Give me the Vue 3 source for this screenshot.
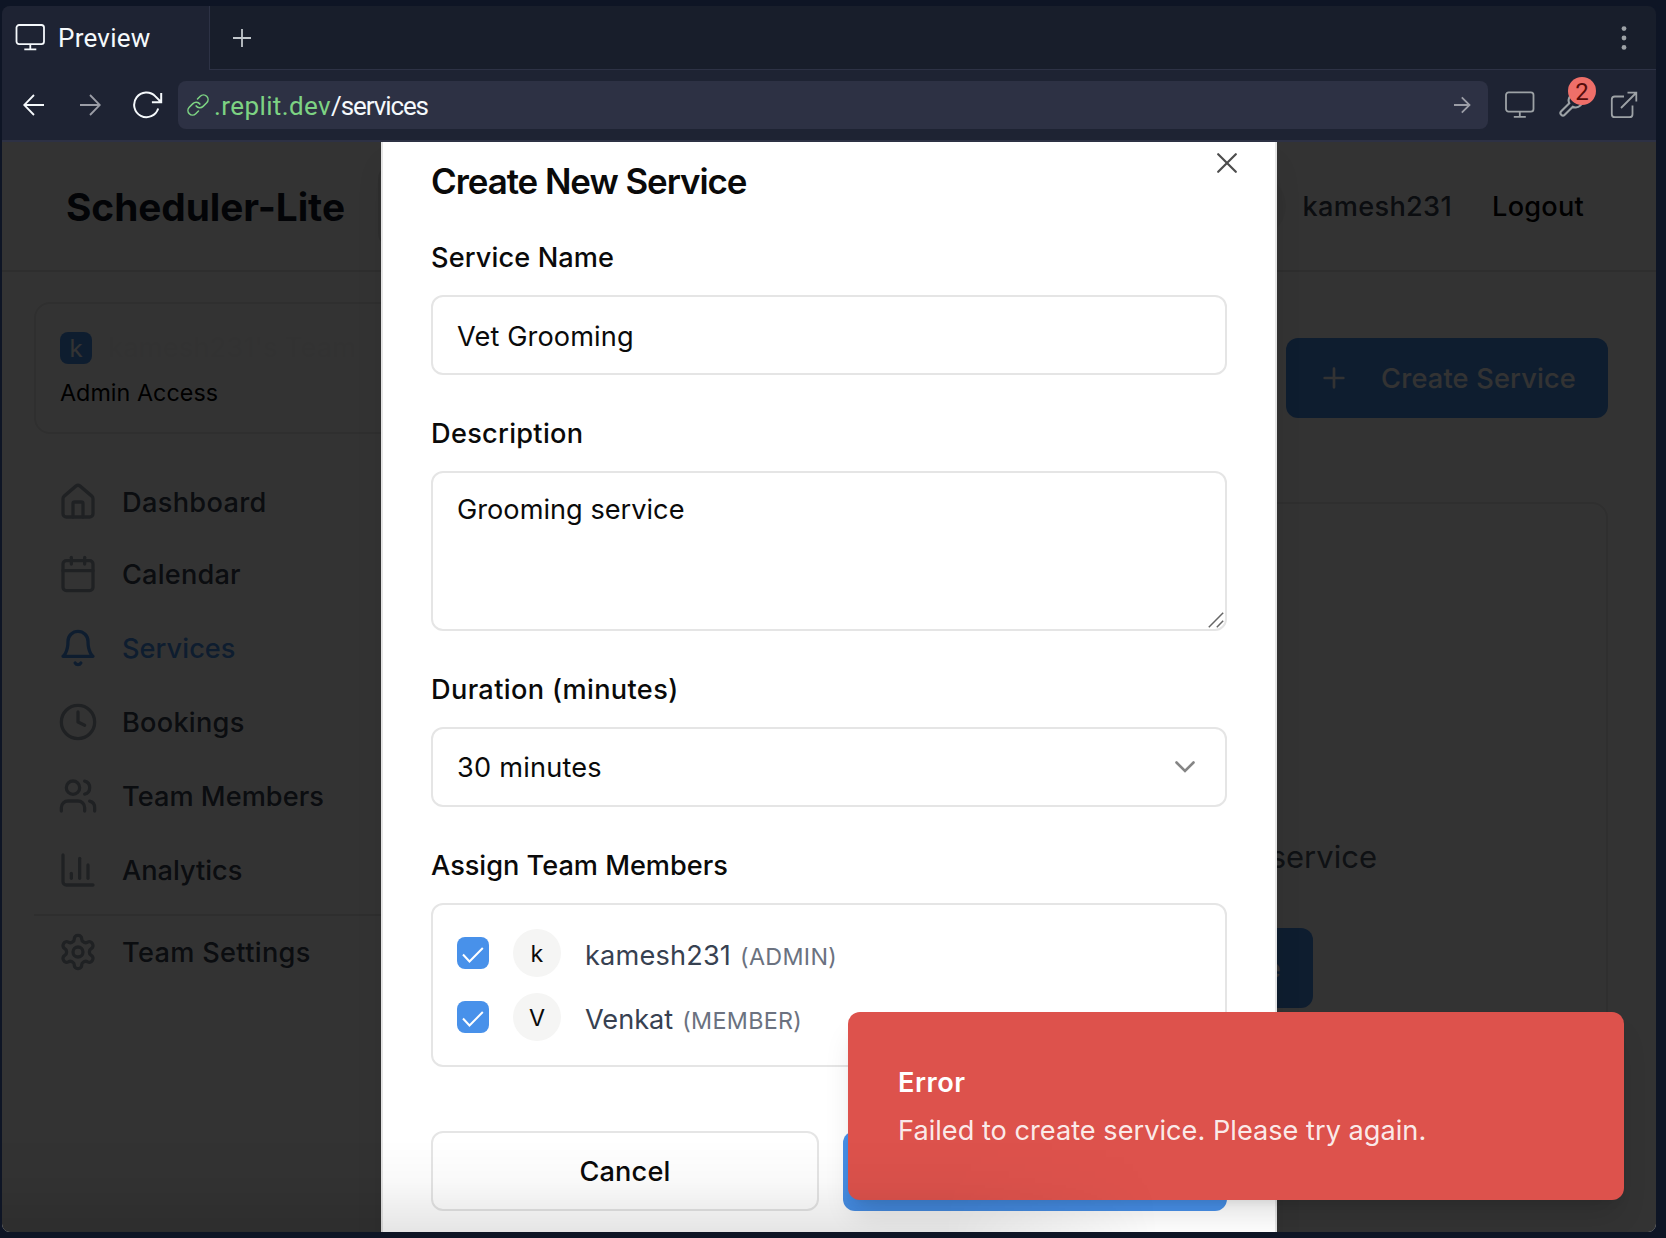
<script setup>
const nav = [
  { key: 'dashboard', label: 'Dashboard', paths: ['M15 21v-8a1 1 0 0 0-1-1h-4a1 1 0 0 0-1 1v8', 'M3 10a2 2 0 0 1 .709-1.528l7-5.999a2 2 0 0 1 2.582 0l7 5.999A2 2 0 0 1 21 10v9a2 2 0 0 1-2 2H5a2 2 0 0 1-2-2z'] },
  { key: 'calendar', label: 'Calendar', paths: ['M8 2v4', 'M16 2v4', 'M5 4h14a2 2 0 0 1 2 2v14a2 2 0 0 1-2 2H5a2 2 0 0 1-2-2V6a2 2 0 0 1 2-2z', 'M3 10h18'] },
  { key: 'services', label: 'Services', active: true, paths: ['M6 8a6 6 0 0 1 12 0c0 7 3 9 3 9H3s3-2 3-9', 'M10.3 21a1.94 1.94 0 0 0 3.4 0'] },
  { key: 'bookings', label: 'Bookings', paths: ['M12 2a10 10 0 1 0 0 20a10 10 0 1 0 0-20', 'M12 6v6l4 2'] },
  { key: 'people', label: 'Team Members', paths: ['M16 21v-2a4 4 0 0 0-4-4H6a4 4 0 0 0-4 4v2', 'M9 3a4 4 0 1 0 0 8a4 4 0 1 0 0-8', 'M22 21v-2a4 4 0 0 0-3-3.87', 'M16 3.13a4 4 0 0 1 0 7.75'] },
  { key: 'analytics', label: 'Analytics', paths: ['M3 3v16a2 2 0 0 0 2 2h16', 'M18 17V9', 'M13 17V5', 'M8 17v-3'] },
  { key: 'settings', label: 'Team Settings', paths: ['M12.22 2h-.44a2 2 0 0 0-2 2v.18a2 2 0 0 1-1 1.73l-.43.25a2 2 0 0 1-2 0l-.15-.08a2 2 0 0 0-2.73.73l-.22.38a2 2 0 0 0 .73 2.73l.15.1a2 2 0 0 1 1 1.72v.51a2 2 0 0 1-1 1.74l-.15.09a2 2 0 0 0-.73 2.73l.22.38a2 2 0 0 0 2.73.73l.15-.08a2 2 0 0 1 2 0l.43.25a2 2 0 0 1 1 1.73V20a2 2 0 0 0 2 2h.44a2 2 0 0 0 2-2v-.18a2 2 0 0 1 1-1.73l.43-.25a2 2 0 0 1 2 0l.15.08a2 2 0 0 0 2.73-.73l.22-.39a2 2 0 0 0-.73-2.73l-.15-.08a2 2 0 0 1-1-1.74v-.5a2 2 0 0 1 1-1.74l.15-.09a2 2 0 0 0 .73-2.73l-.22-.38a2 2 0 0 0-2.73-.73l-.15.08a2 2 0 0 1-2 0l-.43-.25a2 2 0 0 1-1-1.73V4a2 2 0 0 0-2-2z', 'M12 9a3 3 0 1 0 0 6a3 3 0 1 0 0-6'] },
]

const members = [
  { key: 'kamesh', initial: 'k', name: 'kamesh231', role: '(ADMIN)' },
  { key: 'venkat', initial: 'V', name: 'Venkat', role: '(MEMBER)' },
]
</script>

<template>
  <div class="desk">
    <div class="frame">
      <div class="tabs">
        <div class="tab">
          <svg class="ic" width="30" height="28" viewBox="0 0 30 28"><rect x="1.5" y="1" width="27.5" height="19.2" rx="2.6" /><path d="M15.3 20.2v5M9.300 25.4h12" /></svg>
          <span class="tab-name">Preview</span>
        </div>
        <svg class="ic add" width="18" height="18" viewBox="0 0 18 18"><path d="M9 0v18M0 9h18" /></svg>
        <svg class="kebab" width="6" height="26" viewBox="0 0 6 26"><circle cx="3" cy="3.6" r="2.4" /><circle cx="3" cy="13" r="2.4" /><circle cx="3" cy="22.4" r="2.4" /></svg>
      </div>

      <div class="toolbar">
        <svg class="ic back" width="22" height="22" viewBox="0 0 22 22"><path d="M21 11H1.5M11 1L1.2 11L11 21" /></svg>
        <svg class="ic fwd" width="22" height="22" viewBox="0 0 22 22"><path d="M1 11h19.5M11 1l9.8 10L11 21" /></svg>
        <svg class="ic reload" width="30" height="28" viewBox="0 0 30 28"><path d="M25.2 17.5A12.3 12.3 0 1 1 22.4 5.400L28 11M28.2 2v9.3h-9.3" /></svg>
        <div class="url">
          <svg class="link" width="22" height="22" viewBox="0 0 24 24"><path d="M10 13a5 5 0 0 0 7.54.54l4-4a5 5 0 0 0-7.07-7.07l-3 3" /><path d="M14 11a5 5 0 0 0-7.54-.54l-4 4a5 5 0 0 0 7.07 7.07l3-3" /></svg>
          <span class="host">.replit.dev</span><span class="path">/services</span>
          <svg class="ic go" width="18" height="18" viewBox="0 0 18 18"><path d="M1 9h15.5M8.8 1.3L16.5 9l-7.7 7.7" /></svg>
        </div>
        <svg class="ic dim monitor" width="30" height="28" viewBox="0 0 30 28"><rect x="1" y="1.4" width="27.5" height="19.2" rx="2.6" /><path d="M14.8 20.6v5M8.8 25.8h12" /></svg>
        <div class="tools">
          <svg class="ic dim" width="28" height="28" viewBox="0 0 24 24"><path d="M14.7 6.3a1 1 0 0 0 0 1.400l1.6 1.6a1 1 0 0 0 1.4 0l3.77-3.77a6 6 0 0 1-7.94 7.94l-6.910 6.91a2.12 2.12 0 0 1-3-3l6.91-6.91a6 6 0 0 1 7.94-7.94l-3.76 3.76z" /></svg>
          <span class="badge">2</span>
        </div>
        <svg class="ic dim open" width="28" height="28" viewBox="0 0 28 28"><path d="M14 5.5H4.8a3 3 0 0 0-3 3v14.7a3 3 0 0 0 3 3h14.7a3 3 0 0 0 3-3V14.5M11 17L26 2M17.500 1.7h8.8v8.8" /></svg>
      </div>

      <div class="view">
        <header class="head">
          <span class="brand">Scheduler-Lite</span>
          <span class="team-select"></span>
          <span class="avatar-lg"></span>
          <span class="user">kamesh231</span>
          <span class="logout">Logout</span>
        </header>
        <div class="body">
          <aside class="side">
            <div class="team">
              <div class="team-row"><span class="team-badge">k</span><span class="team-name">kamesh231's Team</span></div>
              <div class="team-role">Admin Access</div>
            </div>
            <nav class="nav">
              <div v-for="n in nav" :key="n.key" class="nav-item" :class="[`nav-${n.key}`, { active: n.active }]">
                <svg width="40" height="40" viewBox="0 0 24 24"><path v-for="p in n.paths" :key="p" :d="p" /></svg>
                <span>{{ n.label }}</span>
              </div>
            </nav>
          </aside>
          <main class="main">
            <div class="create">
              <svg width="32" height="32" viewBox="0 0 24 24"><path d="M5 12h14M12 5v14" /></svg>
              <span>Create Service</span>
            </div>
            <section class="empty">
              <p class="hint">service</p>
              <div class="create empty-btn"><span>Create Service</span></div>
            </section>
          </main>
        </div>

        <div class="scrim"></div>

        <div class="dialog">
          <h2 class="title">Create New Service</h2>
          <svg class="close" width="20" height="20" viewBox="0 0 20 20"><path d="M1.2 1.2l17.6 17.6M18.8 1.2L1.2 18.8" /></svg>

          <label class="label l-name">Service Name</label>
          <div class="field"><span class="v-name">Vet Grooming</span></div>

          <label class="label l-desc">Description</label>
          <div class="field area">
            <span>Grooming service</span>
            <svg class="grip" width="16" height="16" viewBox="0 0 16 16"><path d="M.8 15.2L15.2.8M8.8 15.2l6.4-6.4" /></svg>
          </div>

          <label class="label l-dur">Duration (minutes)</label>
          <div class="field select">
            <span class="v-dur">30 minutes</span>
            <svg width="20" height="12" viewBox="0 0 20 12"><path d="M1.5 1.5l8.5 8.5l8.5-8.5" /></svg>
          </div>

          <label class="label">Assign Team Members</label>
          <div class="members">
            <div v-for="m in members" :key="m.key" class="member" :class="m.key">
              <span class="check"><svg width="22" height="16" viewBox="0 0 22 16"><path d="M1 7.5l6.5 7L20.8 1" /></svg></span>
              <span class="avatar">{{ m.initial }}</span>
              <span class="m-name">{{ m.name }}</span>
              <span class="m-role">{{ m.role }}</span>
            </div>
          </div>

          <div class="actions">
            <div class="cancel">Cancel</div>
            <div class="submit"></div>
          </div>
        </div>

        <div class="toast">
          <div class="t-title">Error</div>
          <div class="t-text">Failed to create service. Please try again.</div>
        </div>
        <div class="shade"></div>
      </div>
    </div>
  </div>
</template>

<style>
body { margin: 0; background: #0e1525; }
</style>

<style scoped>
* { box-sizing: border-box; }
svg { display: block; flex: none; fill: none; }
.desk { width: 1666px; height: 1238px; padding: 6px 10px 6px 2px; background: #0e1525; overflow: hidden; font: 400 27.15px/40px Inter, "Liberation Sans", sans-serif; color: #0a0a0a; }
.frame { height: 1226px; display: flex; flex-direction: column; border-radius: 8px; overflow: hidden; }

.ic { stroke: #f5f9fc; stroke-width: 1.8; }
.tabs { height: 64px; flex: none; display: flex; align-items: center; background: #181e2b; font-family: Roboto, sans-serif; box-shadow: inset 0 -1px #2d3245; }
.tab { width: 208px; height: 64px; display: flex; align-items: center; padding: 0 0 0 13px; background: #1e2333; border-right: 1px solid #2d3245; color: #f5f9fc; }
.tab-name { margin-left: 13px; font-size: 26px; letter-spacing: .25px; }
.add { margin: 0 0 0 23px; stroke: #c2c8cc; }
.kebab { margin-left: auto; margin-right: 29px; fill: #9da2a6; }

.toolbar { height: 72px; flex: none; display: flex; align-items: center; background: #1e2333; border-bottom: 2px solid #2d3144; font-family: Roboto, sans-serif; padding-left: 21px; }
.fwd { margin-left: 34px; stroke: #9b9da6; }
.reload { margin-left: 32px; stroke-width: 2; }
.url { width: 1310px; height: 48px; margin-left: 15px; padding: 0 17px 0 9px; display: flex; align-items: center; background: #2d3144; border-radius: 8px; font-size: 26px; color: #f5f9fc; }
.link { stroke: #7dd383; stroke-width: 1.7; stroke-linecap: round; }
.host { margin: 1px 0 0 5px; color: #7dd383; letter-spacing: .4px; }
.path { margin-top: 1px; letter-spacing: -1.1px; }
.go { margin-left: auto; stroke: #9b9da6; }
.dim { stroke: #9da2a6; }
.monitor { margin-left: 17px; }
.tools { position: relative; margin-left: 22px; }
.badge { position: absolute; left: 11px; top: -14px; width: 28px; height: 28px; border-radius: 50%; background: #ef6f69; color: #560c0a; font-size: 24px; line-height: 30px; text-align: center; }
.open { margin-left: 25px; }

.view { position: relative; flex: 1; background: #fff; overflow: hidden; }
.head { height: 130px; display: flex; align-items: center; padding: 0 72px 0 64px; border-bottom: 2px solid #e7e7e7; }
.brand { padding-top: 1px; font-size: 38.8px; font-weight: 700; letter-spacing: -.05px; color: #111827; white-space: nowrap; }
.team-select { width: 300px; height: 80px; margin-left: 33px; border: 2px solid #e7e7e7; border-radius: 12px; }
.avatar-lg { width: 64px; height: 64px; margin-left: auto; border-radius: 50%; background: #f5f5f4; }
.user { margin-left: 16px; padding-top: 2px; font-weight: 500; letter-spacing: .33px; color: #374151; }
.logout { margin-left: 40px; padding-top: 2px; font-weight: 500; letter-spacing: .24px; color: #000; }

.body { display: flex; height: 960px; }
.side { width: 480px; padding: 30px 0 0 32px; }
.team { height: 132px; padding: 28px 24px 0; border: 2px solid #e9e9e9; border-radius: 16px; }
.team-row { display: flex; align-items: center; height: 32px; }
.team-badge { width: 32px; height: 32px; border-radius: 8px; background: #4891ea; color: #fff; font-size: 24px; line-height: 33px; text-align: center; }
.team-name { margin-left: 16px; font-weight: 500; color: #fafafa; }
.team-role { margin-top: 12px; font-size: 23.3px; line-height: 34px; letter-spacing: .04px; color: #000; }
.nav { margin-top: 32px; }
.nav-item { height: 72px; display: flex; align-items: center; gap: 24px; padding-left: 24px; margin-top: 2px; font-weight: 500; color: #374151; letter-spacing: .06px; }
.nav-item svg { stroke: #9ca3af; stroke-width: 2; stroke-linecap: round; stroke-linejoin: round; }
.nav-item span { padding-top: 2px; }
.nav-item.active { color: #4891ea; }
.nav-item.active svg { stroke: #4891ea; }
.nav-dashboard { margin-top: 0; letter-spacing: .35px; }
.nav-calendar { margin-top: 0; letter-spacing: .2px; }
.nav-bookings { letter-spacing: .27px; }
.nav-analytics { letter-spacing: 0; }
.nav-settings { height: 74px; margin-top: 8px; border-top: 2px solid #e7e7e7; letter-spacing: .33px; }
.main { flex: 1; display: flex; flex-direction: column; align-items: flex-end; padding: 66px 48px 0 48px; }
.create { display: flex; align-items: center; justify-content: flex-end; width: 322px; height: 80px; padding-right: 32px; gap: 31px; border-radius: 12px; background: #4891ea; color: #fff; font-weight: 500; letter-spacing: .2px; }
.create span { padding-top: 2px; }
.create svg { stroke: #fff; stroke-width: 2; stroke-linecap: round; }
.empty { width: 1040px; height: 560px; margin-top: 84px; padding: 331px 293px 0 0; display: flex; flex-direction: column; align-items: flex-end; border: 2px solid #e9e9e9; border-radius: 16px; }
.hint { margin: 0 -64px 0 0; font-size: 31px; line-height: 44px; color: #4b5563; }
.empty-btn { margin-top: 49px; }

.scrim { position: absolute; inset: 0; background: rgba(0, 0, 0, .8); }
.dialog { position: absolute; left: 379px; top: 0; width: 896px; height: 1120px; padding: 21px 48px 0; display: flex; flex-direction: column; background: #fff; border: solid #e5e5e5; border-width: 0 2px; box-shadow: 0 20px 30px -6px rgba(0, 0, 0, .1); }
.title { margin: 0; font-size: 34.9px; line-height: 36px; font-weight: 600; letter-spacing: -1.04px; }
.close { position: absolute; left: 834px; top: 11px; stroke: #4d4d4d; stroke-width: 2.2; stroke-linecap: round; }
.label { margin-top: 38px; line-height: 42px; font-weight: 500; }
.l-name { letter-spacing: .12px; }
.l-desc { letter-spacing: .3px; }
.l-dur { letter-spacing: .36px; }
.field { position: relative; height: 80px; margin-top: 16px; padding: 20px 24px 0; border: 2px solid #e5e5e5; border-radius: 12px; }
.v-name { letter-spacing: .12px; }
.v-dur { padding-top: 2px; letter-spacing: .22px; }
.area { height: 160px; padding-top: 17px; letter-spacing: .02px; }
.grip { position: absolute; right: 1px; bottom: 1px; stroke: #666; stroke-width: 1.5; }
.select { display: flex; align-items: center; justify-content: space-between; padding: 0 30px 0 24px; }
.select svg { stroke: #858585; stroke-width: 2.6; stroke-linecap: round; }
.members { height: 164px; margin-top: 16px; padding: 24px; border: 2px solid #e5e5e5; border-radius: 12px; display: flex; flex-direction: column; gap: 16px; }
.member { display: flex; align-items: center; height: 48px; }
.check { width: 32px; height: 32px; display: flex; align-items: center; justify-content: center; padding-top: 3px; border-radius: 8px; background: #4891ea; }
.check svg { stroke: #fff; stroke-width: 2; }
.avatar { width: 48px; height: 48px; margin-left: 24px; border-radius: 50%; background: #f5f5f4; font-size: 23.3px; line-height: 50px; text-align: center; }
.m-name { margin: 6px 0 0 24px; color: #374151; letter-spacing: .18px; }
.m-role { margin: 7px 0 0 9px; font-size: 23.3px; color: #6b7280; letter-spacing: .33px; }
.venkat .m-name { letter-spacing: 0; }
.actions { display: flex; gap: 24px; margin-top: 64px; }
.cancel { width: 388px; height: 80px; border: 2px solid #e5e5e5; border-radius: 12px; line-height: 78px; text-align: center; font-weight: 500; letter-spacing: .15px; }
.submit { flex: 1; height: 80px; border-radius: 12px; background: #4891ea; }

.toast { position: absolute; left: 846px; top: 870px; width: 776px; height: 188px; padding: 51px 50px 0; border-radius: 12px; background: #dd524c; box-shadow: 0 20px 30px -6px rgba(0, 0, 0, .12), 0 8px 12px -8px rgba(0, 0, 0, .12); color: #fff; }
.t-title { font-weight: 600; letter-spacing: .5px; }
.t-text { margin-top: 8px; letter-spacing: .02px; color: rgba(255, 255, 255, .9); }
.shade { position: absolute; left: 0; right: 0; bottom: 0; height: 92px; background: linear-gradient(transparent, rgba(0, 0, 0, .025) 45%, rgba(0, 0, 0, .1)); mask-image: linear-gradient(to right, #000 57%, transparent 70%); }
</style>
